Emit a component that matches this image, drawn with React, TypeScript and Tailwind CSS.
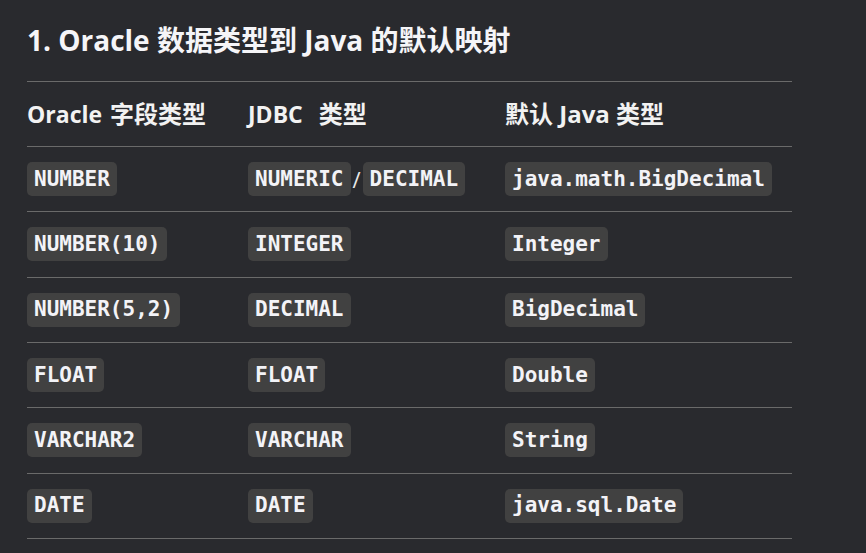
import React from "react";

const sans = "font-['Open_Sans','Noto_Sans_CJK_SC',sans-serif]";

function Code({ children }: { children: React.ReactNode }) {
  return (
    <span className="inline-flex h-[34px] items-center rounded-[5px] bg-[#414141] px-[7px] font-['DejaVu_Sans_Mono',monospace] text-[21px] font-bold leading-none text-[#f3f3f7]">
      {children}
    </span>
  );
}

const rows: [React.ReactNode, React.ReactNode, React.ReactNode][] = [
  [
    <Code>NUMBER</Code>,
    <span className="flex items-center">
      <Code>NUMERIC</Code>
      <span className={`mx-[2px] text-[22px] font-normal text-[#e8e8e8] ${sans}`}>/</span>
      <Code>DECIMAL</Code>
    </span>,
    <Code>java.math.BigDecimal</Code>,
  ],
  [<Code>NUMBER(10)</Code>, <Code>INTEGER</Code>, <Code>Integer</Code>],
  [<Code>NUMBER(5,2)</Code>, <Code>DECIMAL</Code>, <Code>BigDecimal</Code>],
  [<Code>FLOAT</Code>, <Code>FLOAT</Code>, <Code>Double</Code>],
  [<Code>VARCHAR2</Code>, <Code>VARCHAR</Code>, <Code>String</Code>],
  [<Code>DATE</Code>, <Code>DATE</Code>, <Code>java.sql.Date</Code>],
];

export default function App() {
  return (
    <div className={`min-h-[553px] w-[866px] overflow-hidden bg-[#292a2e] pl-[27px] pt-[21px] ${sans}`}>
      <h2 className="h-[39px] whitespace-pre text-[28px] font-bold leading-[39px] text-[#f5f5f8]">
        1. Oracle 数据类型到 Java 的默认映射
      </h2>
      <div className="mt-[21px] w-[765px] border-b border-[#6a6a6a]">
        <div className="grid h-[65px] grid-cols-[221px_257px_287px] items-center border-t border-[#6a6a6a] font-bold leading-[30px] text-[#f2f2f2]">
          <div className="h-[30px] whitespace-pre">
            <span className="text-[23px]">Oracle </span>
            <span className="ml-[2px] text-[24px]">字段类型</span>
          </div>
          <div className="h-[30px] whitespace-pre">
            <span className="text-[23px]">JDBC </span>
            <span className="ml-[10px] text-[24px]">类型</span>
          </div>
          <div className="h-[30px] whitespace-pre">
            <span className="text-[24px]">默认</span>
            <span className="text-[24px]"> Java </span>
            <span className="text-[24px]">类型</span>
          </div>
        </div>
        {rows.map((r, i) => (
          <div
            key={i}
            className="grid h-[65.33px] grid-cols-[221px_257px_287px] items-center border-t border-[#6a6a6a]"
          >
            <div className="flex">{r[0]}</div>
            <div className="flex">{r[1]}</div>
            <div className="flex">{r[2]}</div>
          </div>
        ))}
      </div>
    </div>
  );
}
